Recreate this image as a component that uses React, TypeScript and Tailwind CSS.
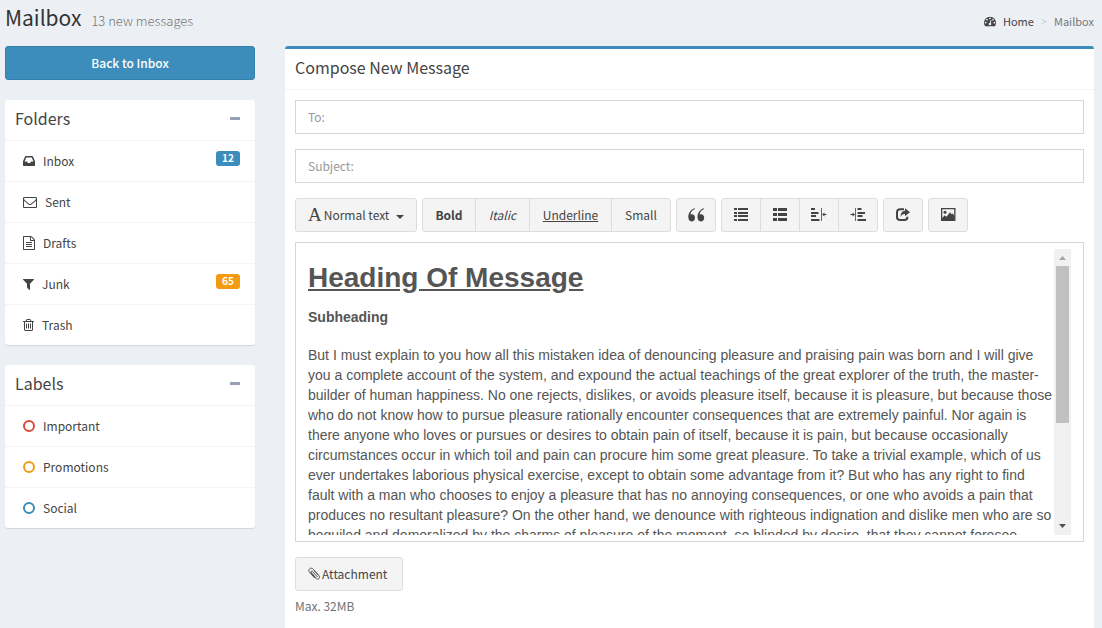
import type { ReactNode } from "react";

const PATHS = {
  inbox:
    "M1151 960h316q-1-3-2.5-8t-2.5-8l-212-496h-708l-212 496q-1 2-2.5 8t-2.5 8h316l95 192h320zm513 30v482q0 26-19 45t-45 19h-1408q-26 0-45-19t-19-45v-482q0-62 25-123l238-552q10-25 36.5-42t52.5-17h832q26 0 52.5 17t36.5 42l238 552q25 61 25 123z",
  envelope:
    "M1664 1504v-768q-32 36-69 66-268 206-426 338-51 43-83 67t-86.5 48.5-102.5 24.5h-2q-48 0-102.5-24.5t-86.5-48.5-83-67q-158-132-426-338-37-30-69-66v768q0 13 9.5 22.5t22.5 9.5h1472q13 0 22.5-9.5t9.5-22.5zm0-1051v-24.5l-.5-13-3-12.5-5.5-9-9-7.5-14-2.5h-1472q-13 0-22.5 9.5t-9.5 22.5q0 168 147 284 193 152 401 317 6 5 35 29.5t46 37.5 44.5 31.5 50.5 27.5 43 9h2q20 0 43-9t50.5-27.5 44.5-31.5 46-37.5 35-29.5q208-165 401-317 54-43 100.5-115.5t46.5-131.5zm128-37v1088q0 66-47 113t-113 47h-1472q-66 0-113-47t-47-113v-1088q0-66 47-113t113-47h1472q66 0 113 47t47 113z",
  file:
    "M1596 380q28 28 48 76t20 88v1152q0 40-28 68t-68 28h-1344q-40 0-68-28t-28-68v-1600q0-40 28-68t68-28h896q40 0 88 20t76 48zm-444-244v376h376q-10-29-22-41l-313-313q-12-12-41-22zm384 1528v-1024h-416q-40 0-68-28t-28-68v-416h-768v1536h1280zm-1024-864q0-14 9-23t23-9h704q14 0 23 9t9 23v64q0 14-9 23t-23 9h-704q-14 0-23-9t-9-23v-64zm736 224q14 0 23 9t9 23v64q0 14-9 23t-23 9h-704q-14 0-23-9t-9-23v-64q0-14 9-23t23-9h704zm0 256q14 0 23 9t9 23v64q0 14-9 23t-23 9h-704q-14 0-23-9t-9-23v-64q0-14 9-23t23-9h704z",
  filter:
    "M1595 295q17 41-14 70l-493 493v742q0 42-39 59-13 5-25 5-27 0-45-19l-256-256q-19-19-19-45v-486l-493-493q-31-29-14-70 17-39 59-39h1280q42 0 59 39z",
  trash:
    "M704 736v576q0 14-9 23t-23 9h-64q-14 0-23-9t-9-23v-576q0-14 9-23t23-9h64q14 0 23 9t9 23zm256 0v576q0 14-9 23t-23 9h-64q-14 0-23-9t-9-23v-576q0-14 9-23t23-9h64q14 0 23 9t9 23zm256 0v576q0 14-9 23t-23 9h-64q-14 0-23-9t-9-23v-576q0-14 9-23t23-9h64q14 0 23 9t9 23zm128 724v-948h-896v948q0 22 7 40.5t14.5 27 10.5 8.5h832q3 0 10.5-8.5t14.5-27 7-40.5zm-672-1076h448l-48-117q-7-9-17-11h-317q-10 2-17 11zm928 32v64q0 14-9 23t-23 9h-96v948q0 83-47 143.5t-113 60.5h-832q-66 0-113-58.5t-47-141.5v-952h-96q-14 0-23-9t-9-23v-64q0-14 9-23t23-9h309l70-167q15-37 54-63t79-26h320q40 0 79 26t54 63l70 167h309q14 0 23 9t9 23z",
  gauge:
    "M384 1152q0-53-37.5-90.5t-90.5-37.5-90.5 37.5-37.5 90.5 37.5 90.5 90.5 37.5 90.5-37.5 37.5-90.5zm192-448q0-53-37.5-90.5t-90.5-37.5-90.5 37.5-37.5 90.5 37.5 90.5 90.5 37.5 90.5-37.5 37.5-90.5zm428 481l101-382q6-26-7.5-48.5t-38.5-29.5-48 6.5-30 39.5l-101 382q-60 5-107 43.5t-63 98.5q-20 77 20 146t117 89 146-20 89-117q16-60-6-117t-72-91zm660-33q0-53-37.5-90.5t-90.5-37.5-90.5 37.5-37.5 90.5 37.5 90.5 90.5 37.5 90.5-37.5 37.5-90.5zm-640-640q0-53-37.5-90.5t-90.5-37.5-90.5 37.5-37.5 90.5 37.5 90.5 90.5 37.5 90.5-37.5 37.5-90.5zm448 192q0-53-37.5-90.5t-90.5-37.5-90.5 37.5-37.5 90.5 37.5 90.5 90.5 37.5 90.5-37.5 37.5-90.5zm320 448q0 261-141 483-19 29-54 29h-1402q-35 0-54-29-141-221-141-483 0-182 71-348t191-286 286-191 348-71 348 71 286 191 191 286 71 348z",
};

/* Each view box is trimmed horizontally to the glyph's own advance width. */
function FolderIcon({ name }: { name: keyof typeof PATHS }) {
  if (name === "envelope") {
    return (
      <svg viewBox="0 0 1792 1792" className="h-3.5 w-3.5 fill-current" aria-hidden="true">
        <path d={PATHS.envelope} />
      </svg>
    );
  }
  if (name === "filter" || name === "trash") {
    return (
      <svg viewBox="192 0 1408 1792" className="h-3.5 w-[11px] fill-current" aria-hidden="true">
        <path d={PATHS[name]} />
      </svg>
    );
  }
  return (
    <svg viewBox="128 0 1536 1792" className="h-3.5 w-3 fill-current" aria-hidden="true">
      <path d={PATHS[name]} />
    </svg>
  );
}

function Ring({ tone }: { tone: string }) {
  return (
    <svg viewBox="0 0 12 14" className={`h-3.5 w-3 fill-none stroke-2 ${tone}`} aria-hidden="true">
      <circle cx="6" cy="7" r="5" />
    </svg>
  );
}

function SidePanel({ title, children }: { title: string; children: ReactNode }) {
  return (
    <section className="rounded-[3px] bg-white shadow-[0_1px_1px_rgba(0,0,0,0.1)]">
      <header className="flex h-[41px] items-center justify-between border-b border-[#f4f4f4] pr-[15px] pb-1 pl-2.5">
        <h2 className="text-[16px] leading-5 text-[#444]">{title}</h2>
        <button type="button" aria-label={`Collapse ${title}`} className="py-2">
          <svg viewBox="0 0 10 3" className="h-[3px] w-2.5 fill-[#97a0b3]" aria-hidden="true">
            <rect width="10" height="3" rx="0.5" />
          </svg>
        </button>
      </header>
      <ul className="divide-y divide-[#f4f4f4]">{children}</ul>
    </section>
  );
}

function Row({ icon, label, badge, tone }: { icon: ReactNode; label: string; badge?: string; tone?: string }) {
  return (
    <li>
      <a href="#" className="flex items-start justify-between py-2.5 pr-[15px] pl-[18px] leading-5 text-[#444]">
        <span className="flex items-center gap-2">
          {icon}
          {label}
        </span>
        {badge && (
          <span className={`h-[15px] w-6 rounded-[3px] text-center text-[10px] leading-[13px] font-bold text-white ${tone}`}>
            {badge}
          </span>
        )}
      </a>
    </li>
  );
}

function ToolGroup({ children }: { children: ReactNode }) {
  return (
    <div className="flex h-[34px] divide-x divide-[#ddd] overflow-hidden rounded-[3px] border border-[#ddd] bg-[#f4f4f4]">
      {children}
    </div>
  );
}

function Tool({ label, className, children }: { label: string; className: string; children: ReactNode }) {
  return (
    <button type="button" aria-label={label} className={`flex items-center justify-center ${className}`}>
      {children}
    </button>
  );
}

function Glyph({ children }: { children: ReactNode }) {
  return (
    <svg viewBox="0 0 16 14" className="h-3.5 w-4 fill-[#444]" aria-hidden="true">
      {children}
    </svg>
  );
}

const QuoteGlyph = () => (
  <svg viewBox="0 0 17 14" className="h-3.5 w-[17px] fill-[#444]" aria-hidden="true">
    <path d="M7 .9C4.200 1.900 2.600 3.900 2.500 6.700c.4-.3.900-.4 1.400-.4 1.800 0 3.100 1.400 3.100 3.400 0 2.100-1.400 3.700-3.300 3.700C1.500 13.400.3 11.600.3 9 .3 4.900 2.800 1.600 6.800.3z" />
    <path d="M16.200.9c-2.800 1-4.400 3-4.500 5.800.4-.3.900-.4 1.400-.4 1.800 0 3.100 1.400 3.100 3.400 0 2.100-1.400 3.700-3.300 3.700-2.200 0-3.400-1.800-3.400-4.400 0-4.100 2.500-7.400 6.500-8.700z" />
  </svg>
);

const ListGlyph = () => (
  <Glyph>
    <path d="M1 0h3v2H1zM5 0h10v2H5zM1 4h3v2H1zM5 4h10v2H5zM1 7h3v2H1zM5 7h10v2H5zM1 11h3v2H1zM5 11h10v2H5z" />
  </Glyph>
);

const BlockListGlyph = () => (
  <Glyph>
    <path d="M1 0h4v3H1zM6 0h9v3H6zM1 5h4v3H1zM6 5h9v3H6zM1 10h4v3H1zM6 10h9v3H6z" />
  </Glyph>
);

const OutdentGlyph = () => (
  <Glyph>
    <path d="M0 0h4v2H0zM0 4h7.500v2H0zM0 7h5v2H0zM0 11h8.500v2H0z" />
    <path d="M10 0h1v13h-1z" fillOpacity="0.800" />
    <path d="M11 6.500l2.500-2v1.500h2v1h-2v1.500z" />
  </Glyph>
);

const IndentGlyph = () => (
  <Glyph>
    <path d="M7.500 0h4v2h-4zM7.500 4H15v2H7.500zM7.500 7h5v2h-5zM7.500 11H16v2H7.500z" />
    <path d="M5 0h1v13H5z" fillOpacity="0.800" />
    <path d="M5 6.500l-2.500-2v1.500h-2v1h2v1.500z" />
  </Glyph>
);

const ShareGlyph = () => (
  <Glyph>
    <path
      d="M9 1.200H5.200C3 1.200 2 2.400 2 4.200v5C2 11 3 12 5.200 12h4.200c2 0 3-1 3-2.800V8.800"
      fill="none"
      stroke="#444"
      strokeWidth="2"
    />
    <path d="M10 0.300l5 4-5 4V6C7.800 5.900 6.600 6.800 5.500 9c.1-3.600 1.500-5.900 4.500-6.200z" />
  </Glyph>
);

const PictureGlyph = () => (
  <Glyph>
    <path fillRule="evenodd" d="M1 0h14.500v13H1zM2.300 1.300v10.400h11.900V1.300z" />
    <circle cx="5" cy="4.200" r="1.500" />
    <path d="M2 12v-1.800l2.800-3 1.700 1.600L10 4.300l1.600 2 1-.7 2 2.400v4z" />
  </Glyph>
);

const ClipGlyph = () => (
  <svg
    viewBox="0 0 12 14"
    className="h-3.5 w-3 fill-none stroke-[#444]"
    strokeWidth="0.900"
    strokeLinecap="round"
    aria-hidden="true"
  >
    <path d="M3 5.800l4.700 5.300c1.200 1.300 2.600 1.300 3.300.5.800-.9.700-2-.3-3.200L5.200 2.200C4 .9 2.400.9 1.500 1.800.5 2.700.6 4.100 1.600 5.300l5 5.600" />
    <path d="M9.300 9.800L4.600 4.500c-.5-.5-1-.6-1.400-.2-.4.400-.3.900.1 1.400l4 4.500" />
    <path d="M6.200 3.500l4 4.500" />
  </svg>
);

function Scrollbar() {
  return (
    <div className="flex w-[17px] shrink-0 flex-col bg-[#f1f1f1]" aria-hidden="true">
      <svg viewBox="0 0 17 17" className="h-[17px] w-[17px] fill-[#a3a3a3]">
        <path d="M5 11h7L8.500 7z" />
      </svg>
      <div className="mx-0.5 h-[157px] bg-[#c1c1c1]" />
      <svg viewBox="0 0 17 17" className="mt-auto h-[17px] w-[17px] fill-[#505050]">
        <path d="M5 6h7l-3.500 4z" />
      </svg>
    </div>
  );
}

const INPUT =
  "block h-[34px] w-full border border-[#d2d6de] bg-white px-3 pb-0.5 text-[#555] outline-none placeholder:text-[#999]";

export default function App() {
  return (
    <div className="flex min-h-screen flex-col bg-[#ecf0f5] pr-2 pl-[5px] font-['Noto_Sans_CJK_SC',sans-serif] text-[12px] leading-5 text-[#333]">
      <header className="flex h-[46px] items-start justify-between pt-[5px]">
        <h1 className="flex items-baseline gap-2.5 text-[21px] leading-6">
          Mailbox
          <small className="text-[13px] font-light text-[#777]">13 new messages</small>
        </h1>
        <nav aria-label="Breadcrumb" className="pt-[7px]">
          <ol className="flex items-center text-[11px] leading-[18px]">
            <li>
              <a href="#" className="flex items-center gap-[7px] text-[#444]">
                <svg viewBox="0 0 1792 1792" className="h-3 w-3 fill-current" aria-hidden="true">
                  <path d={PATHS.gauge} />
                </svg>
                Home
              </a>
            </li>
            <li className="px-[7px] text-[#ccc]" aria-hidden="true">
              &gt;
            </li>
            <li className="text-[#777]">Mailbox</li>
          </ol>
        </nav>
      </header>

      <div className="flex flex-1 gap-[30px]">
        <aside className="flex w-[250px] shrink-0 flex-col gap-5">
          <a
            href="#"
            className="flex h-[34px] items-center justify-center rounded-[3px] border border-[#367fa9] bg-[#3c8dbc] font-medium text-white"
          >
            Back to Inbox
          </a>
          <SidePanel title="Folders">
            <Row icon={<FolderIcon name="inbox" />} label="Inbox" badge="12" tone="bg-[#3c8dbc]" />
            <Row icon={<FolderIcon name="envelope" />} label="Sent" />
            <Row icon={<FolderIcon name="file" />} label="Drafts" />
            <Row icon={<FolderIcon name="filter" />} label="Junk" badge="65" tone="bg-[#f39c12]" />
            <Row icon={<FolderIcon name="trash" />} label="Trash" />
          </SidePanel>
          <SidePanel title="Labels">
            <Row icon={<Ring tone="stroke-[#dd4b39]" />} label="Important" />
            <Row icon={<Ring tone="stroke-[#f39c12]" />} label="Promotions" />
            <Row icon={<Ring tone="stroke-[#3c8dbc]" />} label="Social" />
          </SidePanel>
        </aside>

        <main className="min-w-0 flex-1 rounded-t-[3px] border-t-[3px] border-[#3c8dbc] bg-white">
          <header className="flex h-[41px] items-center border-b border-[#f4f4f4] px-2.5 pb-1">
            <h2 className="text-[16px] leading-5 text-[#444]">Compose New Message</h2>
          </header>
          <form className="flex flex-col gap-[15px] p-2.5 pb-0">
            <input aria-label="To" placeholder="To:" className={INPUT} />
            <input aria-label="Subject" placeholder="Subject:" className={INPUT} />

            <div className="flex flex-col gap-2.5">
              <div role="toolbar" aria-label="Formatting" className="flex flex-wrap gap-[5px] text-[#444]">
                <ToolGroup>
                  <Tool label="Normal text" className="w-[120px] px-3">
                    <span className="pr-0.5 font-['Liberation_Serif',serif] text-[19px] leading-5">A</span>
                    Normal text
                    <svg viewBox="0 0 8 4" className="mt-1 ml-auto h-1 w-2 fill-[#444]" aria-hidden="true">
                      <path d="M0 0h8L4 4z" />
                    </svg>
                  </Tool>
                </ToolGroup>
                <ToolGroup>
                  <Tool label="Bold" className="w-[53px] font-bold">Bold</Tool>
                  <Tool label="Italic" className="w-[54px] italic">Italic</Tool>
                  <Tool label="Underline" className="w-[82px] underline">Underline</Tool>
                  <Tool label="Small" className="w-[58px]">Small</Tool>
                </ToolGroup>
                <ToolGroup>
                  <Tool label="Quote" className="w-[38px]"><QuoteGlyph /></Tool>
                </ToolGroup>
                <ToolGroup>
                  <Tool label="Unordered list" className="w-[39px]"><ListGlyph /></Tool>
                  <Tool label="Ordered list" className="w-[39px]"><BlockListGlyph /></Tool>
                  <Tool label="Outdent" className="w-[39px]"><OutdentGlyph /></Tool>
                  <Tool label="Indent" className="w-[38px]"><IndentGlyph /></Tool>
                </ToolGroup>
                <ToolGroup>
                  <Tool label="Insert link" className="w-[38px]"><ShareGlyph /></Tool>
                </ToolGroup>
                <ToolGroup>
                  <Tool label="Insert image" className="w-[38px]"><PictureGlyph /></Tool>
                </ToolGroup>
              </div>

              <div className="flex h-[300px] border border-[#d2d6de] px-3 py-1.5">
                <div
                  role="textbox"
                  aria-label="Message"
                  aria-multiline="true"
                  contentEditable
                  suppressContentEditableWarning
                  className="min-w-0 flex-1 overflow-hidden font-['Liberation_Sans',Arial,sans-serif] text-[14px] leading-5 text-[#555] outline-none"
                >
                  <h1 className="pt-[9px] text-[28px] leading-10 font-bold underline">Heading Of Message</h1>
                  <h4 className="pt-[9px] pb-[18px] font-bold">Subheading</h4>
                  <p>
                    But I must explain to you how all this mistaken idea of denouncing pleasure and praising pain was
                    born and I will give you a complete account of the system, and expound the actual teachings of the
                    great explorer of the truth, the master-builder of human happiness. No one rejects, dislikes, or
                    avoids pleasure itself, because it is pleasure, but because those who do not know how to pursue
                    pleasure rationally encounter consequences that are extremely painful. Nor again is there anyone
                    who loves or pursues or desires to obtain pain of itself, because it is pain, but because
                    occasionally circumstances occur in which toil and pain can procure him some great pleasure. To
                    take a trivial example, which of us ever undertakes laborious physical exercise, except to obtain
                    some advantage from it? But who has any right to find fault with a man who chooses to enjoy a
                    pleasure that has no annoying consequences, or one who avoids a pain that produces no resultant
                    pleasure? On the other hand, we denounce with righteous indignation and dislike men who are so
                    beguiled and demoralized by the charms of pleasure of the moment, so blinded by desire, that they
                    cannot foresee
                  </p>
                </div>
                <Scrollbar />
              </div>
            </div>

            <div className="flex flex-col items-start gap-[5px]">
              <button
                type="button"
                className="flex h-[34px] w-[108px] items-center gap-0.5 rounded-[3px] border border-[#ddd] bg-[#f4f4f4] px-3 text-[#444]"
              >
                <ClipGlyph />
                Attachment
              </button>
              <p className="text-[#737373]">Max. 32MB</p>
            </div>
          </form>
        </main>
      </div>
    </div>
  );
}
